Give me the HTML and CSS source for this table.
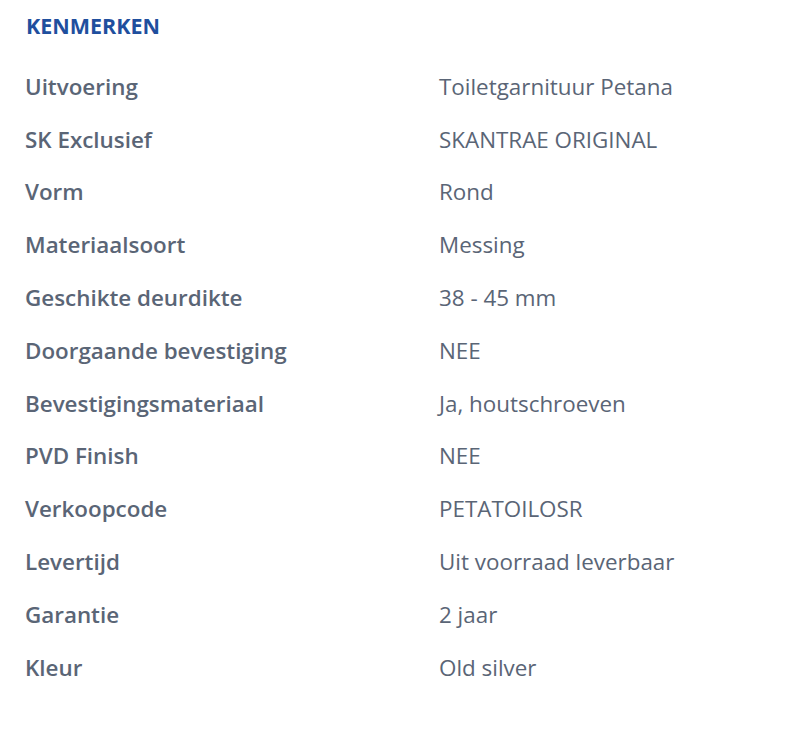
FILE: index.html
```html
<!DOCTYPE html>
<html lang="nl">
<head>
<meta charset="utf-8">
<link rel="stylesheet" href="styles.css">
</head>
<body>
<section class="specs">
  <h2 class="specs-title">KENMERKEN</h2>
  <dl class="specs-list">
    <div class="row"><dt>Uitvoering</dt><dd>Toiletgarnituur Petana</dd></div>
    <div class="row"><dt>SK Exclusief</dt><dd>SKANTRAE ORIGINAL</dd></div>
    <div class="row"><dt>Vorm</dt><dd>Rond</dd></div>
    <div class="row"><dt>Materiaalsoort</dt><dd>Messing</dd></div>
    <div class="row"><dt>Geschikte deurdikte</dt><dd>38 - 45 mm</dd></div>
    <div class="row"><dt>Doorgaande bevestiging</dt><dd>NEE</dd></div>
    <div class="row"><dt>Bevestigingsmateriaal</dt><dd>Ja, houtschroeven</dd></div>
    <div class="row"><dt>PVD Finish</dt><dd>NEE</dd></div>
    <div class="row"><dt>Verkoopcode</dt><dd>PETATOILOSR</dd></div>
    <div class="row"><dt>Levertijd</dt><dd>Uit voorraad leverbaar</dd></div>
    <div class="row"><dt>Garantie</dt><dd>2 jaar</dd></div>
    <div class="row"><dt>Kleur</dt><dd>Old silver</dd></div>
  </dl>
</section>
</body>
</html>
```

FILE: styles.css
```css
* { box-sizing: border-box; }
body {
  margin: 0;
  background: #ffffff;
  font-family: "Open Sans", "Noto Sans", sans-serif;
  color: #5a6576;
}
.specs {
  padding: 12px 25px 0 25px;
}
.specs-title {
  margin: 0 0 0 1px;
  font-size: 21.5px;
  font-weight: 700;
  color: #1f4f9e;
  line-height: 28px;
}
.specs-list {
  margin: 20px 0 0 0;
}
.row {
  display: grid;
  grid-template-columns: 414px 1fr;
  height: 52.8px;
  align-items: center;
}
dt {
  font-size: 22.4px;
  font-weight: 600;
  margin: 0;
}
dd {
  font-size: 22.4px;
  font-weight: 400;
  margin: 0;
}
```
